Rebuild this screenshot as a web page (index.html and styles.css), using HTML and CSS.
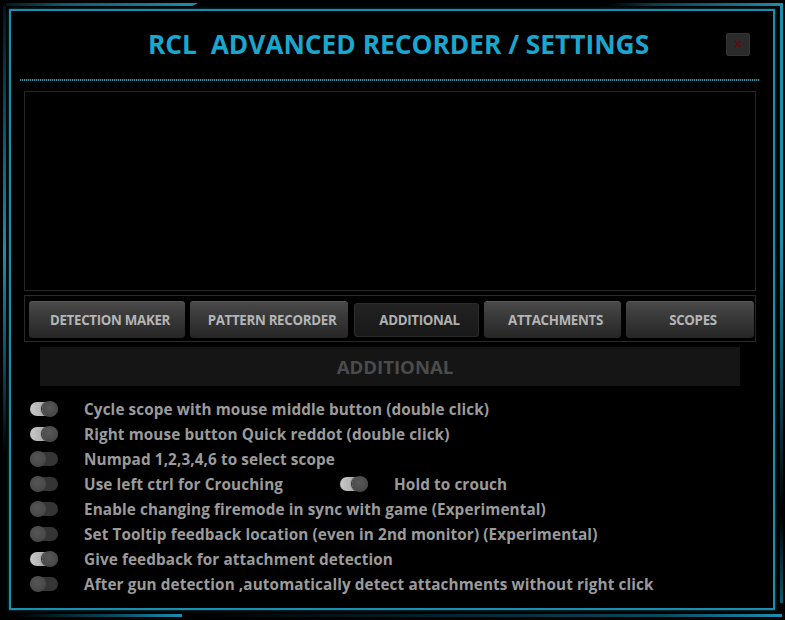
FILE: index.html
```html
<!DOCTYPE html>
<html>
<head>
<meta charset="utf-8">
<link rel="stylesheet" href="styles.css">
</head>
<body>
<div class="window">
  <div class="deco deco-top-left"></div>
  <div class="deco deco-top-right"></div>
  <div class="deco deco-left"></div>
  <div class="deco deco-right"></div>
  <div class="deco deco-bottom-left"></div>
  <div class="deco deco-bottom-right"></div>
  <div class="frame">
    <div class="header">
      <h1 class="title">RCL  ADVANCED RECORDER / SETTINGS</h1>
      <button class="close" aria-label="close"><span class="close-x">×</span></button>
    </div>
    <div class="dots"></div>
    <div class="viewport"></div>
    <div class="tabs">
      <div class="tab">DETECTION MAKER</div>
      <div class="tab">PATTERN RECORDER</div>
      <div class="tab active">ADDITIONAL</div>
      <div class="tab">ATTACHMENTS</div>
      <div class="tab">SCOPES</div>
    </div>
    <div class="section">ADDITIONAL</div>
    <ul class="options">
      <li class="opt"><span class="toggle on"></span><span class="label">Cycle scope with mouse middle button (double click)</span></li>
      <li class="opt"><span class="toggle on"></span><span class="label">Right mouse button Quick reddot (double click)</span></li>
      <li class="opt"><span class="toggle"></span><span class="label">Numpad 1,2,3,4,6 to select scope</span></li>
      <li class="opt"><span class="toggle"></span><span class="label label-fixed">Use left ctrl for Crouching</span><span class="toggle on"></span><span class="label">Hold to crouch</span></li>
      <li class="opt"><span class="toggle"></span><span class="label">Enable changing firemode in sync with game (Experimental)</span></li>
      <li class="opt"><span class="toggle"></span><span class="label">Set Tooltip feedback location (even in 2nd monitor) (Experimental)</span></li>
      <li class="opt"><span class="toggle on"></span><span class="label">Give feedback for attachment detection</span></li>
      <li class="opt"><span class="toggle"></span><span class="label">After gun detection ,automatically detect attachments without right click</span></li>
    </ul>
  </div>
</div>
</body>
</html>
```
FILE: styles.css
```css
* { box-sizing: border-box; }
html, body {
  margin: 0;
  padding: 0;
  background: #000;
}
body {
  width: 785px;
  height: 620px;
  overflow: hidden;
  font-family: "Open Sans", "Noto Sans", "DejaVu Sans", sans-serif;
}
.window {
  position: relative;
  width: 785px;
  height: 620px;
  padding: 9px 10px 10px 9px;
  background: #000;
}
.deco { position: absolute; }
.deco-top-left {
  left: 6px; top: 3px; width: 192px; height: 3px;
  background: linear-gradient(90deg, #04181e 0%, #0e5a70 30%, #1a8fb0 100%);
  clip-path: polygon(0 0, 100% 0, 97% 100%, 0 100%);
}
.deco-top-right {
  left: 200px; top: 3px; width: 582px; height: 3px;
  background: linear-gradient(90deg, #000 0%, #000 70%, #0b3c4a 78%, #1a8fb0 100%);
}
.deco-right {
  left: 780px; top: 3px; width: 3px; height: 600px;
  background: linear-gradient(180deg, #1a8fb0 0%, #1a8fb0 40%, #0a3440 70%, #000 85%, #0e5a70 100%);
}
.deco-left {
  left: 3px; top: 6px; width: 3px; height: 450px;
  background: linear-gradient(180deg, #03151b 0%, #0e5a70 30%, #1a8fb0 55%, #0b4a5c 80%, #000 100%);
}
.deco-bottom-left {
  left: 12px; top: 614px; width: 170px; height: 3px;
  background: linear-gradient(90deg, #000 0%, #0b4a5c 60%, #1a8fb0 100%);
}
.deco-bottom-right {
  left: 184px; top: 614px; width: 598px; height: 3px;
  background: linear-gradient(90deg, #000 0%, #04202a 40%, #0b4a5c 80%, #1a8fb0 100%);
}
.frame {
  position: relative;
  width: 766px;
  height: 601px;
  border: 2px solid #1a90b0;
  box-shadow: 0 0 3px #0b4a5c;
  padding: 0 17px 0 13px;
  display: flex;
  flex-direction: column;
}
.header {
  height: 68px;
  display: flex;
  align-items: center;
  padding-left: 124px;
  padding-right: 6px;
}
.title {
  flex: 1;
  margin: 0;
  white-space: pre;
  text-align: left;
  font-size: 26.3px;
  font-weight: 700;
  color: #1aa7cf;
  line-height: 1;
  margin-top: -1px;
}
.close {
  width: 24px;
  height: 23px;
  margin-top: -2px;
  background: #2b2b2b;
  border: 1px solid #353535;
  border-radius: 2px;
  padding: 0;
  display: flex;
  align-items: center;
  justify-content: center;
}
.close-x {
  color: #5e0c10;
  font-size: 14px;
  line-height: 1;
  font-weight: 700;
}
.dots {
  height: 2px;
  margin: 0 -4px 0 -4px;
  background-image:
    linear-gradient(90deg, #4fb0c8 50%, #0e3540 50%);
  background-size: 2px 2px;
  opacity: 0.8;
}
.viewport {
  margin-top: 10px;
  height: 200px;
  border: 1px solid #262626;
  background: #000;
}
.tabs {
  margin-top: 4px;
  height: 47px;
  border: 1px solid #2a2a2a;
  display: flex;
  align-items: center;
  gap: 5px;
  padding: 2px 1px 0 4px;
}
.tab {
  height: 37px;
  display: flex;
  align-items: center;
  justify-content: center;
  padding-left: 6px;
  border-radius: 4px;
  background: linear-gradient(180deg, #4a4a4a 0%, #3a3a3a 40%, #262626 100%);
  box-shadow: inset 0 1px 0 #555, 0 1px 2px #000;
  color: #b5b5b5;
  font-size: 13.3px;
  font-weight: 700;
  letter-spacing: -0.3px;
}
.tab:nth-child(1) { width: 156px; }
.tab:nth-child(2) { width: 158px; }
.tab:nth-child(3) { width: 125px; height: 34px; margin-left: 1px; }
.tab:nth-child(4) { width: 137px; }
.tab:nth-child(5) { width: 128px; }
.tab.active {
  background: linear-gradient(180deg, #222 0%, #181818 100%);
  box-shadow: inset 0 0 0 1px #2a2a2a;
  color: #b0b0b0;
}
.section {
  margin: 5px 16px 0 16px;
  height: 39px;
  background: #151515;
  color: #4b4b4b;
  font-size: 18.6px;
  font-weight: 700;
  display: flex;
  align-items: center;
  justify-content: center;
  padding-left: 10px;
}
.options {
  list-style: none;
  margin: 10px 0 0 0;
  padding: 0 0 0 6px;
}
.opt {
  height: 25px;
  display: flex;
  align-items: center;
}
.toggle {
  position: relative;
  width: 28px;
  height: 14px;
  border-radius: 7px;
  background: #353535;
  flex: none;
  margin-right: 26px;
}
.toggle::after {
  content: "";
  position: absolute;
  left: 0;
  top: -1px;
  width: 16px;
  height: 16px;
  border-radius: 50%;
  background: radial-gradient(circle at 45% 40%, #555 0%, #4a4a4a 60%, #3c3c3c 100%);
}
.toggle.on {
  background: linear-gradient(90deg, #c8c8c8 0%, #a8a8a8 60%, #444 60%);
}
.toggle.on::after {
  left: 12px;
  background: radial-gradient(circle at 45% 40%, #585858 0%, #4a4a4a 60%, #3a3a3a 100%);
  box-shadow: -1px 0 1px #222;
}
.label {
  color: #9b9b9b;
  font-size: 15.3px;
  font-weight: 700;
  white-space: nowrap;
  letter-spacing: 0.1px;
}
.label-fixed {
  width: 256px;
}
```
